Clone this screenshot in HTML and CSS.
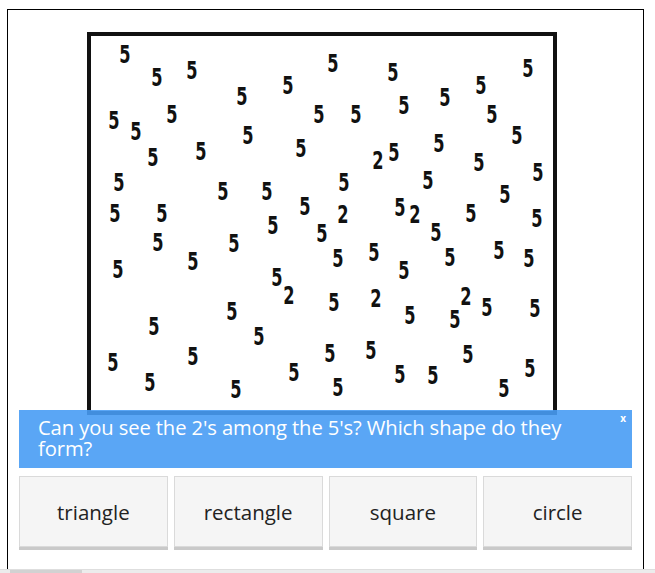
FILE: index.html
```html
<!DOCTYPE html>
<html lang="en">
<head>
<meta charset="utf-8">
<title>Find the 2's</title>
<link rel="stylesheet" href="styles.css">
</head>
<body>
<div class="frame">
  <div class="picture">
    <span class="d" style="left:34px;top:18px">5</span>
    <span class="d" style="left:66px;top:41px">5</span>
    <span class="d" style="left:101px;top:34px">5</span>
    <span class="d" style="left:242px;top:27px">5</span>
    <span class="d" style="left:302px;top:36px">5</span>
    <span class="d" style="left:437px;top:32px">5</span>
    <span class="d" style="left:197px;top:49px">5</span>
    <span class="d" style="left:151px;top:60px">5</span>
    <span class="d" style="left:390px;top:49px">5</span>
    <span class="d" style="left:354px;top:61px">5</span>
    <span class="d" style="left:313px;top:69px">5</span>
    <span class="d" style="left:23px;top:84px">5</span>
    <span class="d" style="left:45px;top:95px">5</span>
    <span class="d" style="left:81px;top:78px">5</span>
    <span class="d" style="left:228px;top:78px">5</span>
    <span class="d" style="left:265px;top:78px">5</span>
    <span class="d" style="left:401px;top:78px">5</span>
    <span class="d" style="left:157px;top:99px">5</span>
    <span class="d" style="left:426px;top:99px">5</span>
    <span class="d" style="left:62px;top:121px">5</span>
    <span class="d" style="left:110px;top:115px">5</span>
    <span class="d" style="left:210px;top:112px">5</span>
    <span class="d" style="left:287px;top:124px">2</span>
    <span class="d" style="left:303px;top:116px">5</span>
    <span class="d" style="left:348px;top:107px">5</span>
    <span class="d" style="left:388px;top:126px">5</span>
    <span class="d" style="left:447px;top:136px">5</span>
    <span class="d" style="left:28px;top:146px">5</span>
    <span class="d" style="left:253px;top:146px">5</span>
    <span class="d" style="left:337px;top:144px">5</span>
    <span class="d" style="left:132px;top:155px">5</span>
    <span class="d" style="left:176px;top:155px">5</span>
    <span class="d" style="left:414px;top:158px">5</span>
    <span class="d" style="left:24px;top:177px">5</span>
    <span class="d" style="left:71px;top:177px">5</span>
    <span class="d" style="left:214px;top:170px">5</span>
    <span class="d" style="left:252px;top:178px">2</span>
    <span class="d" style="left:309px;top:171px">5</span>
    <span class="d" style="left:324px;top:178px">2</span>
    <span class="d" style="left:380px;top:177px">5</span>
    <span class="d" style="left:446px;top:182px">5</span>
    <span class="d" style="left:182px;top:189px">5</span>
    <span class="d" style="left:231px;top:197px">5</span>
    <span class="d" style="left:345px;top:196px">5</span>
    <span class="d" style="left:67px;top:206px">5</span>
    <span class="d" style="left:143px;top:207px">5</span>
    <span class="d" style="left:247px;top:222px">5</span>
    <span class="d" style="left:283px;top:216px">5</span>
    <span class="d" style="left:359px;top:221px">5</span>
    <span class="d" style="left:408px;top:214px">5</span>
    <span class="d" style="left:438px;top:222px">5</span>
    <span class="d" style="left:27px;top:233px">5</span>
    <span class="d" style="left:102px;top:225px">5</span>
    <span class="d" style="left:313px;top:234px">5</span>
    <span class="d" style="left:186px;top:241px">5</span>
    <span class="d" style="left:198px;top:259px">2</span>
    <span class="d" style="left:243px;top:266px">5</span>
    <span class="d" style="left:285px;top:262px">2</span>
    <span class="d" style="left:375px;top:260px">2</span>
    <span class="d" style="left:396px;top:271px">5</span>
    <span class="d" style="left:444px;top:272px">5</span>
    <span class="d" style="left:141px;top:275px">5</span>
    <span class="d" style="left:319px;top:279px">5</span>
    <span class="d" style="left:364px;top:283px">5</span>
    <span class="d" style="left:63px;top:290px">5</span>
    <span class="d" style="left:168px;top:300px">5</span>
    <span class="d" style="left:22px;top:326px">5</span>
    <span class="d" style="left:102px;top:320px">5</span>
    <span class="d" style="left:239px;top:317px">5</span>
    <span class="d" style="left:280px;top:314px">5</span>
    <span class="d" style="left:377px;top:318px">5</span>
    <span class="d" style="left:203px;top:336px">5</span>
    <span class="d" style="left:309px;top:338px">5</span>
    <span class="d" style="left:342px;top:339px">5</span>
    <span class="d" style="left:439px;top:332px">5</span>
    <span class="d" style="left:59px;top:346px">5</span>
    <span class="d" style="left:145px;top:353px">5</span>
    <span class="d" style="left:247px;top:351px">5</span>
    <span class="d" style="left:413px;top:352px">5</span>
  </div>
  <div class="banner">
    <p class="question">Can you see the 2's among the 5's? Which shape do they form?</p>
    <span class="close">x</span>
  </div>
  <div class="answers">
    <button class="answer">triangle</button>
    <button class="answer">rectangle</button>
    <button class="answer">square</button>
    <button class="answer">circle</button>
  </div>
</div>
<div class="hscroll"><div class="thumb"></div></div>
</body>
</html>
```

FILE: styles.css
```css
html, body {
  margin: 0;
  padding: 0;
  background: #fff;
}
body {
  font-family: "Open Sans", "Noto Sans", sans-serif;
  overflow: hidden;
}
.frame {
  margin: 9px 0 0 7px;
  width: 637px;
  height: 560px;
  box-sizing: border-box;
  border: 1px solid #000;
  border-bottom: none;
}
.picture {
  position: relative;
  margin: 22px 0 0 79px;
  width: 470px;
  height: 383px;
  box-sizing: border-box;
  border: 4px solid #111;
  background: #fff;
}
.d {
  position: absolute;
  font-family: "DejaVu Sans Condensed", "DejaVu Sans", sans-serif;
  font-weight: bold;
  font-size: 25px;
  line-height: 25px;
  color: #111;
  transform: translate(-50%, -50%) scaleX(0.72);
}
.banner {
  position: relative;
  margin: -5px 11px 0 11px;
  padding: 7px 40px 9px 19px;
  background: rgba(72, 156, 244, 0.9);
}
.question {
  margin: 0;
  color: #fff;
  font-size: 20.2px;
  line-height: 21px;
  letter-spacing: -0.1px;
}
.close {
  position: absolute;
  top: 1px;
  right: 6px;
  color: #fff;
  font-size: 10px;
  font-weight: bold;
}
.answers {
  display: grid;
  grid-template-columns: repeat(4, 1fr);
  column-gap: 6px;
  margin: 8px 11px 0 11px;
}
.answer {
  height: 71px;
  margin: 0;
  padding: 0;
  border: 1px solid #dadada;
  background: #f5f5f5;
  box-shadow: 0 3px 0 #c9c9c9;
  font-family: "Open Sans", "Noto Sans", sans-serif;
  font-size: 20.5px;
  color: #222;
}
.hscroll {
  height: 4px;
  background: #ececec;
  border-top: 1px solid #dedede;
}
.thumb {
  margin-left: 10px;
  width: 72px;
  height: 3px;
  background: #d2d2d2;
}
```
